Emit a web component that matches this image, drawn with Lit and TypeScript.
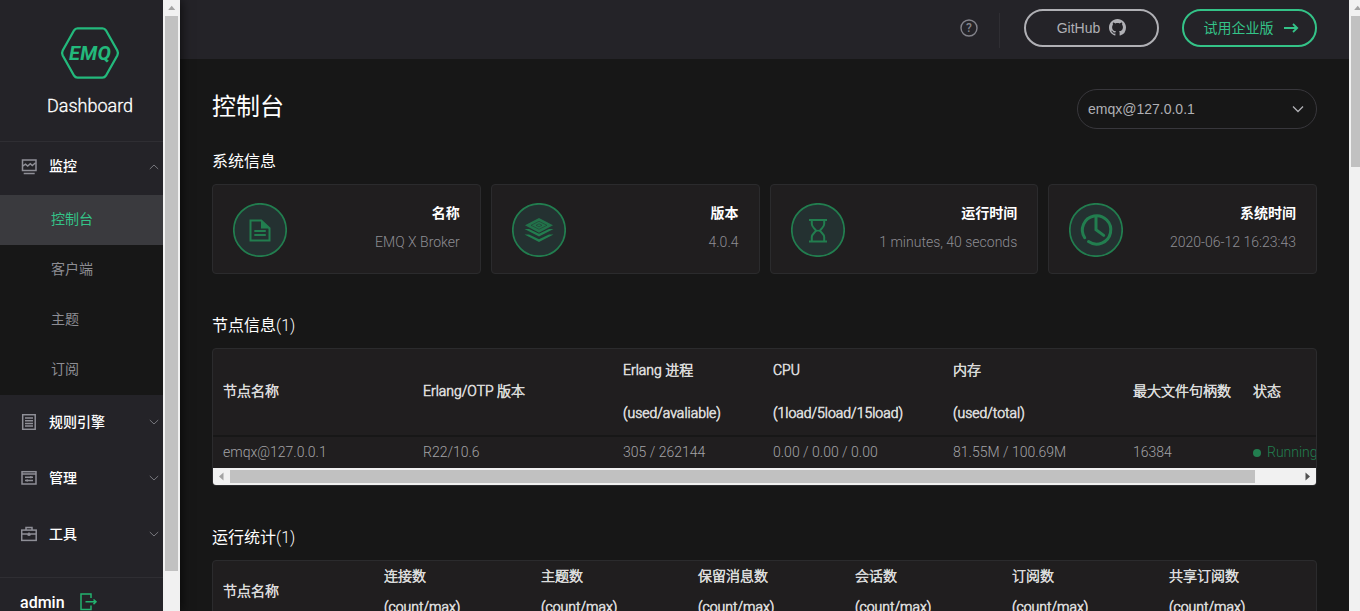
import { LitElement, html, css, svg } from "lit";
import { customElement, property } from "lit/decorators.js";

const icons: Record<string, unknown> = {
  monitor: svg`<rect x="1.500" y="1" width="13.500" height="10.500" /><path d="M1.500 7.200l3-2 2.200 1.900 2.600-2.400 2 1.900 3.300-2.800M2.700 14.500h11" />`,
  rules: svg`<rect x="1.700" y="0.700" width="12.500" height="14.600" /><path d="M4 4h8M4 6.700h8M4 9.400h8M4 12.100h8" />`,
  manage: svg`<rect x="1" y="1.700" width="14" height="12.300" /><path d="M1 4h14M4 7.300h8M4 10.500h8" /><path d="M9.800 6.300v2M6.200 9.500v2" />`,
  tools: svg`<rect x="0.700" y="4.100" width="14.500" height="10.300" /><path d="M5 4V1.500h6V4M0.700 8h14.500M8 6.500v3.600M6.300 8.700h3.400" />`,
};

const cardIcons: Record<string, unknown> = {
  name: svg`<path d="M17.500 17.500h10.700l8.300 7.700v12.300h-19z" fill="none" stroke-width="2" /><path d="M28 17v8.500h9z" stroke="none" /><path d="M21.300 28h11.500M21.300 32h11.500" stroke-width="2" />`,
  version: svg`<path d="M27 15l14 7.300-14 7.500-14-7.500z" stroke="none" opacity=".85" /><path d="M27 18.300l8 4-8 4-8-4zM27 20.800l3 1.500-3 1.500-3-1.500z" fill="none" stroke="#243131" stroke-width=".5" /><path d="M12.500 26h4.500l10 4.800L37 26h4.500L27 33.500zM12.500 31.500h4.500l10 4.800 10-4.800h4.500L27 39z" stroke="none" />`,
  uptime: svg`<path d="M18 17h18M18 38.500h18" stroke-width="2" /><path d="M20.800 17v4c0 3 2.500 4 4.300 6.700C23 30.500 20.800 31.500 20.800 34v4.500M33.200 17v4c0 3-2.500 4-4.300 6.700 2.100 2.800 4.300 3.800 4.300 6.300v4.500" fill="none" stroke-width="2" /><path d="M25 27.700h4" stroke-width="1.600" />`,
  clock: svg`<path d="M15.700 34.700A14.200 14.200 0 1 1 19.500 38.600" fill="none" stroke-width="3" stroke-linecap="round" /><path d="M27 14v12.800l7.700 5.600" fill="none" stroke-width="3" stroke-linecap="round" />`,
};

const fontBase = css`
  :host {
    font-family: Roboto, "Noto Sans CJK SC", sans-serif;
    font-size: 14px;
    box-sizing: border-box;
  }
  * {
    box-sizing: border-box;
  }
`;

@customElement("scroll-bar")
class ScrollBar extends LitElement {
  @property() axis = "y";
  @property({ type: Number }) thumb = 100;
  static styles = css`
    :host {
      display: block;
      flex: none;
      background: #f1f1f1;
      overflow: hidden;
    }
    .bar { display: flex; }
    .y { flex-direction: column; width: 17px; }
    .x { height: 17px; align-items: stretch; }
    .arrow { width: 17px; height: 17px; flex: none; display: block; }
    .y .arrow { height: 16px; }
    .thumb { background: #c1c1c1; flex: none; }
    .y .thumb { margin: 0 2px; }
    .x .thumb { margin: 2px 0; }
    .rest { flex: 1; }
  `;
  render() {
    const x = this.axis === "x";
    return html`<div class="bar ${this.axis}">
      <svg class="arrow" viewBox="0 0 17 17">
        <path d=${x ? "M10.500 4.500v8L6 8.500z" : "M5 10.500h7.500L8.700 6z"} fill="#a3a3a3" />
      </svg>
      <div class="thumb" style=${x ? `width:${this.thumb}px` : `height:${this.thumb}px`}></div>
      <div class="rest"></div>
      ${x ? html`<svg class="arrow" viewBox="0 0 17 17"><path d="M6.500 4.500v8L11 8.500z" fill="#505050" /></svg>` : ""}
    </div>`;
  }
}

@customElement("side-menu")
class SideMenu extends LitElement {
  static styles = [fontBase, css`
    :host {
      display: flex;
      width: 180px;
      height: 100%;
      background: #242328;
      box-shadow: 2px 0 10px rgba(0, 0, 0, 0.6);
      z-index: 1;
      flex: none;
    }
    .panel { width: 163px; overflow: hidden; flex: none; }
    .brand {
      height: 142px;
      width: 180px;
      padding-top: 26px;
      display: flex;
      flex-direction: column;
      align-items: center;
      border-bottom: 1px solid #2f2e33;
      color: #fff;
      font-size: 18px;
      font-weight: 300;
      -webkit-text-stroke: 0.3px #fff;
      line-height: 24px;
    }
    .logo { width: 60px; height: 54px; margin-bottom: 14px; -webkit-text-stroke: 0; }
    .logo text { font: italic 700 20px Roboto, sans-serif; }
    .group {
      height: 56px;
      display: flex;
      align-items: center;
      padding: 0 4px 2px 21px;
      color: #fff;
      font-weight: 500;
    }
    .label { margin-top: -3px; }
    .first { height: 53px; padding-bottom: 4px; }
    .group svg { fill: none; }
    .icon { width: 16px; height: 16px; stroke: #8f8f97; stroke-width: 1.500; margin-right: 12px; }
    .chev { width: 10px; height: 6px; stroke: #77777d; margin-left: auto; }
    .sub { background: #171717; }
    .item {
      height: 50px;
      line-height: 49px;
      padding-left: 51px;
      color: #8d8d93;
    }
    .active { background: #3a3a3e; color: #34c388; }
    .user {
      margin-top: 14px;
      border-top: 1px solid #2f2e33;
      height: 60px;
      padding: 12px 0 0 20px;
      display: flex;
      align-items: flex-start;
      gap: 15px;
      color: #fff;
      font-size: 16px;
      font-weight: 500;
      line-height: 25px;
    }
    .exit { width: 18px; height: 18px; margin-top: 3px; fill: none; stroke: #23b26f; stroke-width: 1.500; }
  `];
  group(icon: string, label: string, open = false) {
    return html`<div class="group ${open ? "first" : ""}">
      <svg class="icon" viewBox="0 0 16 16">${icons[icon]}</svg><span class="label">${label}</span>
      <svg class="chev" viewBox="0 0 10 6"><path d=${open ? "M.8 5L5 1l4.200 4" : "M.8 1L5 5l4.200-4"} /></svg>
    </div>`;
  }
  render() {
    return html`
      <div class="panel">
        <div class="brand">
          <svg class="logo" viewBox="0 0 60 54">
            <path d="M17.500 2.300h25q2.200 0 3.400 2L57.300 24.500q1.300 2.500 0 5L45.900 49.700q-1.200 2-3.400 2h-25q-2.200 0-3.400-2L2.700 29.500q-1.300-2.500 0-5L14.100 4.300q1.200-2 3.400-2z" fill="none" stroke="#23b97c" stroke-width="2.300" />
            <text x="9" y="34" textLength="42" fill="#23b97c">EMQ</text>
          </svg>
          Dashboard
        </div>
        ${this.group("monitor", "监控", true)}
        <div class="sub">
          ${["控制台", "客户端", "主题", "订阅"].map((t, i) => html`<div class="item ${i === 0 ? "active" : ""}">${t}</div>`)}
        </div>
        ${this.group("rules", "规则引擎")}${this.group("manage", "管理")}${this.group("tools", "工具")}
        <div class="user">
          admin
          <svg class="exit" viewBox="0 0 18 18"><path d="M11 5V1H1v15.500h10v-4M5.500 8.800h9.500M13.500 6.500l2.500 2.300-2.500 2.300" /></svg>
        </div>
      </div>
      <scroll-bar axis="y" thumb="555"></scroll-bar>
    `;
  }
}

@customElement("top-bar")
class TopBar extends LitElement {
  static styles = [fontBase, css`
    :host {
      display: flex;
      height: 59px;
      padding: 9px 32px 12px 0;
      background: #242328;
      justify-content: flex-end;
      align-items: flex-start;
      flex: none;
    }
    .help { width: 18px; height: 18px; margin: 10px 21px 0 0; }
    .help text { font: 500 12px Roboto, sans-serif; }
    .line { width: 1px; height: 35px; margin: 4px 24px 0 0; background: #2f2e33; }
    .btn {
      width: 135px;
      height: 38px;
      border: 2px solid #b0b0b5;
      border-radius: 19px;
      color: #b0b0b5;
      display: flex;
      align-items: center;
      justify-content: center;
      gap: 9px;
      font-family: "Liberation Sans", "Noto Sans CJK SC", sans-serif;
    }
    .cat { width: 17px; height: 17px; margin-bottom: 2px; fill: #b0b0b5; }
    .pro { margin-left: 23px; padding: 0 0 2px 3px; border-color: #34c388; color: #34c388; }
    .arrow { width: 16px; height: 12px; margin-top: 2px; fill: none; stroke: #34c388; stroke-width: 1.800; }
  `];
  render() {
    return html`
      <svg class="help" viewBox="0 0 18 18">
        <circle cx="9" cy="9" r="8" fill="none" stroke="#83838b" stroke-width="1.400" />
        <text x="9" y="13.200" text-anchor="middle" fill="#83838b">?</text>
      </svg>
      <div class="line"></div>
      <div class="btn">GitHub
        <svg class="cat" viewBox="0 0 16 16"><path d="M8 0C3.580 0 0 3.580 0 8c0 3.540 2.290 6.530 5.470 7.590.4.070.55-.17.55-.38 0-.19-.01-.82-.01-1.490-2.010.37-2.530-.49-2.690-.94-.09-.23-.48-.94-.82-1.130-.28-.15-.68-.52-.01-.53.63-.01 1.080.58 1.230.82.72 1.210 1.870.87 2.330.66.07-.52.28-.87.51-1.070-1.780-.2-3.640-.89-3.640-3.950 0-.87.31-1.590.82-2.150-.08-.2-.36-1.020.08-2.120 0 0 .67-.21 2.200.82.64-.18 1.320-.27 2-.27s1.360.09 2 .27c1.530-1.040 2.200-.82 2.200-.82.44 1.100.16 1.920.08 2.120.51.56.82 1.270.82 2.150 0 3.070-1.870 3.750-3.650 3.950.29.25.54.73.54 1.480 0 1.070-.01 1.930-.01 2.200 0 .21.15.46.55.38A8.010 8.010 0 0 0 16 8c0-4.420-3.580-8-8-8z" /></svg>
      </div>
      <div class="btn pro">试用企业版
        <svg class="arrow" viewBox="0 0 16 12"><path d="M1 6h13M10 2l4.200 4-4.200 4" /></svg>
      </div>
    `;
  }
}

@customElement("info-card")
class InfoCard extends LitElement {
  @property() icon = "";
  @property() label = "";
  @property() value = "";
  static styles = [fontBase, css`
    :host {
      display: flex;
      height: 90px;
      padding: 17px 20px 0;
      border: 1px solid #2b2b2d;
      border-radius: 4px;
      background: #201e1f;
      justify-content: space-between;
      align-items: flex-start;
    }
    .badge { width: 54px; height: 54px; margin-top: 1px; fill: #227e4f; stroke: #227e4f; }
    .text { text-align: right; color: #8d8d93; font-weight: 300; }
    .label { line-height: 22px; color: #fff; font-weight: 700; }
    .value { line-height: 36px; }
  `];
  render() {
    return html`
      <svg class="badge" viewBox="0 0 54 54">
        <circle cx="27" cy="27" r="26.200" fill="#243131" stroke-width="1.700" />
        ${cardIcons[this.icon]}
      </svg>
      <div class="text"><div class="label">${this.label}</div><div class="value">${this.value}</div></div>
    `;
  }
}

@customElement("app-root")
class AppRoot extends LitElement {
  static styles = [fontBase, css`
    :host {
      display: flex;
      width: 100%;
      height: 611px;
      overflow: hidden;
      background: #171717;
      color: #fff;
    }
    .main { flex: 1; min-width: 0; display: flex; flex-direction: column; }
    .content { padding: 30px 32px 0; }
    .head { display: flex; justify-content: space-between; height: 40px; }
    .title { font-size: 24px; line-height: 36px; }
    .select {
      width: 240px;
      height: 40px;
      border: 1px solid #38373c;
      border-radius: 20px;
      padding: 0 12px 0 10px;
      display: flex;
      align-items: center;
      justify-content: space-between;
      font-family: "Liberation Sans", sans-serif;
      color: #b0b0b5;
    }
    .caret { width: 12px; height: 8px; fill: none; stroke: #b0b0b5; stroke-width: 1.300; }
    .section { font-size: 16px; line-height: 24px; }
    .count { font-weight: 300; }
    .s1 { margin: 21px 0 10px; }
    .s2 { margin: 40px 0 10px; }
    .cards { display: grid; grid-template-columns: repeat(4, 1fr); gap: 10px; }
    .table { border: 1px solid #2b2b2d; border-radius: 4px; background: #201e1f; overflow: hidden; }
    .row { display: grid; align-items: center; white-space: nowrap; }
    .row > div { padding-left: 10px; }
    .nodes { grid-template-columns: 200px 200px 150px 180px 180px 120px 150px; }
    .stats { grid-template-columns: 161px repeat(6, 157px); }
    .th { color: #dcdcdc; font-weight: 300; -webkit-text-stroke: 0.65px #dcdcdc; }
    .nodes > .single { padding-bottom: 2px; }
    .nodes.th { height: 88px; line-height: 43px; border-bottom: 2px solid #171717; }
    .stats.th { height: 62px; line-height: 31px; }
    .stats.th > div { margin-top: -1px; }
    .td { height: 31px; line-height: 31px; color: #a3a3a7; font-weight: 300; }
    .run { color: #227e4f; display: flex; align-items: center; gap: 6px; }
    .dot { width: 8px; height: 8px; border-radius: 50%; background: #227e4f; }
    .page { width: 11px; }
  `];
  render() {
    const nodeCols = [["节点名称"], ["Erlang/OTP 版本"], ["Erlang 进程", "(used/avaliable)"], ["CPU", "(1load/5load/15load)"], ["内存", "(used/total)"], ["最大文件句柄数"], ["状态"]];
    const node = ["emqx@127.0.0.1", "R22/10.6", "305 / 262144", "0.00 / 0.00 / 0.00", "81.55M / 100.69M", "16384"];
    const stats = ["连接数", "主题数", "保留消息数", "会话数", "订阅数", "共享订阅数"];
    return html`
      <side-menu></side-menu>
      <div class="main">
        <top-bar></top-bar>
        <div class="content">
          <div class="head">
            <div class="title">控制台</div>
            <div class="select">emqx@127.0.0.1
              <svg class="caret" viewBox="0 0 12 8"><path d="M1 1.500l5 5 5-5" /></svg>
            </div>
          </div>
          <div class="section s1">系统信息</div>
          <div class="cards">
            <info-card icon="name" label="名称" value="EMQ X Broker"></info-card>
            <info-card icon="version" label="版本" value="4.0.4"></info-card>
            <info-card icon="uptime" label="运行时间" value="1 minutes, 40 seconds"></info-card>
            <info-card icon="clock" label="系统时间" value="2020-06-12 16:23:43"></info-card>
          </div>
          <div class="section s2">节点信息<span class="count">(1)</span></div>
          <div class="table">
            <div class="row nodes th">${nodeCols.map((c) => html`<div class=${c.length === 1 ? "single" : ""}>${c.map((l) => html`<div>${l}</div>`)}</div>`)}</div>
            <div class="row nodes td">
              ${node.map((v) => html`<div>${v}</div>`)}
              <div class="run"><span class="dot"></span>Running</div>
            </div>
            <scroll-bar axis="x" thumb="1025"></scroll-bar>
          </div>
          <div class="section s2">运行统计<span class="count">(1)</span></div>
          <div class="table">
            <div class="row stats th">
              <div>节点名称</div>
              ${stats.map((s) => html`<div><div>${s}</div><div>(count/max)</div></div>`)}
            </div>
          </div>
        </div>
      </div>
      <scroll-bar class="page" axis="y" thumb="151"></scroll-bar>
    `;
  }
}
